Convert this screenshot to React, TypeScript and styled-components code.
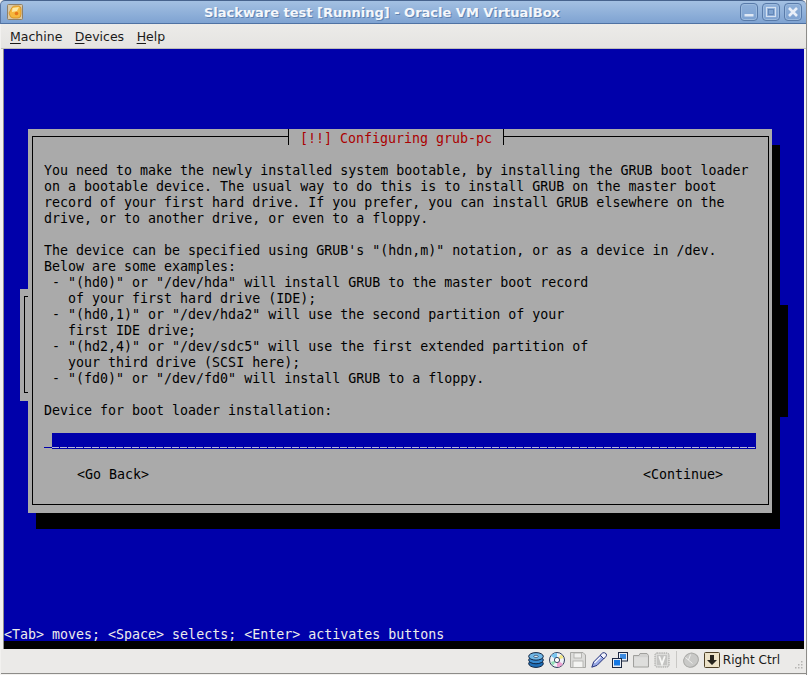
import React from "react";
import styled, { createGlobalStyle } from "styled-components";

const Global = createGlobalStyle`
  html, body { margin: 0; padding: 0; background: #ffffff; }
  #root { width: 808px; height: 675px; overflow: hidden; }
`;

const Window = styled.div`
  width: 808px;
  height: 675px;
  display: flex;
  flex-direction: column;
  background: #f2f1ef;
  font-family: "DejaVu Sans", sans-serif;
  box-sizing: border-box;
  border-right: 1px solid #fbfbfa;
  padding-right: 1px;
  box-shadow: inset -1px 0 0 #8d8c89;
`;

const TitleBar = styled.header`
  height: 24px;
  flex: none;
  display: flex;
  align-items: center;
  box-sizing: border-box;
  padding: 0 4px 0 6px;
  background: linear-gradient(#a3c0e2, #7fa3d2);
  border-top: 1px solid #47638d;
  border-bottom: 1px solid #4f72a3;
  border-left: 1px solid #5a77a3;
  border-radius: 5px 5px 0 0;
`;

const AppIcon = styled.svg`
  width: 16px;
  height: 16px;
  flex: none;
`;

const TitleText = styled.div`
  flex: 1;
  text-align: center;
  padding-left: 1px;
  color: #f4f7fb;
  font-weight: bold;
  font-size: 13px;
  text-shadow: 1px 1px 0 #5f82b0;
  white-space: nowrap;
`;

const WinButtons = styled.div`
  display: flex;
  gap: 4px;
`;

const WinButton = styled.button`
  width: 18px;
  height: 18px;
  padding: 0;
  display: flex;
  align-items: center;
  justify-content: center;
  background: linear-gradient(#8fb0d9, #7ea2d1);
  border: 1px solid #587aa9;
  border-radius: 4px;
  box-shadow: inset 0 0 0 1px #9dbbde;
`;

const MenuBar = styled.nav`
  height: 25px;
  flex: none;
  display: flex;
  align-items: center;
  gap: 12.5px;
  box-sizing: border-box;
  padding: 0 0 0 9px;
  margin-left: 1px;
  background: linear-gradient(#ecebe9, #e5e4e1);
  border-bottom: 1px solid #bdbcb9;
  font-size: 12.5px;
  color: #1a1a1a;
`;

const MenuItem = styled.span`
  white-space: nowrap;
  & u { text-underline-offset: 2px; }
`;

const Screen = styled.main`
  position: relative;
  flex: none;
  width: 800px;
  height: 600px;
  margin-left: 4px;
  background: #0000aa;
  box-shadow: -1px 0 0 #8f8f8f;
  display: flex;
  flex-direction: column;
  font-family: "DejaVu Sans Mono", "Liberation Mono", monospace;
  font-size: 13.3px;
  line-height: 16px;
  color: #000;
  overflow: hidden;
`;

const BackDialog = styled.div`
  position: absolute;
  left: 16px;
  top: 240px;
  width: 752px;
  height: 112px;
  background: #aaaaaa;
  box-shadow: 16px 16px 0 #000;
`;

const BackFrame = styled.div`
  position: absolute;
  left: 4px;
  top: 7px;
  right: 4px;
  bottom: 8px;
  border: 1px solid #000;
`;

const ConsoleArea = styled.div`
  flex: 1;
  position: relative;
  padding: 80px 0 0 24px;
`;

const Dialog = styled.section`
  position: relative;
  width: 744px;
  height: 384px;
  box-sizing: border-box;
  padding: 7px 3px 8px 4px;
  background: #aaaaaa;
  box-shadow: 8px 16px 0 #000;
`;

const Frame = styled.div`
  position: relative;
  height: 100%;
  box-sizing: border-box;
  border: 1px solid #000;
  padding: 26px 11px 0;
  display: flex;
  flex-direction: column;
`;

const DialogTitle = styled.h1`
  position: absolute;
  left: 255px;
  top: -8px;
  height: 16px;
  box-sizing: border-box;
  margin: 0;
  padding: 2px 11px 0;
  background: #aaaaaa;
  border-left: 1px solid #000;
  border-right: 1px solid #000;
  color: #aa0000;
  font: inherit;
  white-space: pre;
`;

const Body = styled.pre`
  margin: 0;
  font: inherit;
  white-space: pre;
`;

const FieldRow = styled.div`
  display: flex;
  height: 16px;
  margin-top: 14px;
`;

const FieldLead = styled.div`
  width: 8px;
  height: 15px;
  box-sizing: border-box;
  border-bottom: 1px solid #0000aa;
`;

const Field = styled.div`
  position: relative;
  width: 704px;
  height: 16px;
  background: #0000aa;
  &::after {
    content: "";
    position: absolute;
    left: 0;
    right: 0;
    bottom: 1px;
    height: 1px;
    background: repeating-linear-gradient(90deg, #b9b9d8 0 7px, transparent 7px 8px);
  }
`;

const ButtonRow = styled.div`
  display: flex;
  justify-content: space-between;
  margin-top: 18px;
  padding: 0 34px 0 33px;
`;

const ConsoleButton = styled.span`
  white-space: pre;
`;

const StatusLine = styled.div`
  flex: none;
  height: 16px;
  box-sizing: border-box;
  padding-top: 2px;
  background: #0000aa;
  color: #ececec;
  white-space: pre;
`;

const BlackLine = styled.div`
  position: relative;
  flex: none;
  height: 8px;
  background: #000;
`;

const StatusBar = styled.footer`
  position: relative;
  flex: none;
  height: 25px;
  margin-left: 1px;
  display: flex;
  align-items: center;
  justify-content: flex-end;
  box-sizing: border-box;
  padding: 0 26px 3px 0;
  background: #ebeae8;
  border-bottom: 1px solid #8d8c89;
  font-size: 12.1px;
  color: #1a1a1a;
`;

const Icons = styled.div`
  display: flex;
  align-items: center;
  gap: 5px;
`;

const StatusIcon = styled.svg`
  width: 16px;
  height: 16px;
  flex: none;
`;

const Separator = styled.div`
  width: 1px;
  height: 17px;
  margin: 0 1px;
  background: #c9c8c5;
`;

const HostKey = styled.span`
  margin-left: 3px;
  white-space: nowrap;
`;

const Grip = styled.svg`
  position: absolute;
  right: 3px;
  bottom: 4px;
  width: 8px;
  height: 8px;
`;

const TEXT = `You need to make the newly installed system bootable, by installing the GRUB boot loader
on a bootable device. The usual way to do this is to install GRUB on the master boot
record of your first hard drive. If you prefer, you can install GRUB elsewhere on the
drive, or to another drive, or even to a floppy.

The device can be specified using GRUB's "(hdn,m)" notation, or as a device in /dev.
Below are some examples:
 - "(hd0)" or "/dev/hda" will install GRUB to the master boot record
   of your first hard drive (IDE);
 - "(hd0,1)" or "/dev/hda2" will use the second partition of your
   first IDE drive;
 - "(hd2,4)" or "/dev/sdc5" will use the first extended partition of
   your third drive (SCSI here);
 - "(fd0)" or "/dev/fd0" will install GRUB to a floppy.

Device for boot loader installation:`;

export default function App() {
  return (
    <Window>
      <Global />
      <TitleBar>
        <AppIcon viewBox="0 0 16 16">
          <rect x="0.5" y="0.5" width="15" height="15" rx="1" fill="#d9c9a8" stroke="#8f8068" />
          <path d="M2 9 L5 3.5 Q6 2 8 2 L12 2 Q14 2.5 14 5 L14 10 Q14 14 11 14 L6 14 Q3 14 2 9 Z" fill="#f5b83e" stroke="#cf8518" strokeWidth="0.7" />
          <path d="M5.5 4 L12 3 L10 7 L5 8 Z" fill="#fde9a6" />
          <circle cx="9.5" cy="9.5" r="1.8" fill="#e8771a" />
        </AppIcon>
        <TitleText>Slackware test [Running] - Oracle VM VirtualBox</TitleText>
        <WinButtons>
          <WinButton aria-label="Minimize">
            <svg width="12" height="12" viewBox="0 0 12 12"><rect x="1.5" y="8" width="9" height="2.5" fill="#dfe8f4" /></svg>
          </WinButton>
          <WinButton aria-label="Maximize">
            <svg width="12" height="12" viewBox="0 0 12 12"><rect x="1.5" y="1.5" width="9" height="9" fill="none" stroke="#d5e1f0" strokeWidth="1.2" /><rect x="3.5" y="3.5" width="5" height="5" fill="#7fa3d1" stroke="#5d7fae" strokeWidth="0.8" /></svg>
          </WinButton>
          <WinButton aria-label="Close">
            <svg width="12" height="12" viewBox="0 0 12 12"><path d="M2 2 L10 10 M10 2 L2 10" stroke="#e9eff8" strokeWidth="2.6" /></svg>
          </WinButton>
        </WinButtons>
      </TitleBar>
      <MenuBar>
        <MenuItem><u>M</u>achine</MenuItem>
        <MenuItem><u>D</u>evices</MenuItem>
        <MenuItem><u>H</u>elp</MenuItem>
      </MenuBar>
      <Screen>
        <ConsoleArea>
          <BackDialog><BackFrame /></BackDialog>
          <Dialog>
            <Frame>
              <DialogTitle>[!!] Configuring grub-pc</DialogTitle>
              <Body>{TEXT}</Body>
              <FieldRow>
                <FieldLead />
                <Field />
              </FieldRow>
              <ButtonRow>
                <ConsoleButton>&lt;Go Back&gt;</ConsoleButton>
                <ConsoleButton>&lt;Continue&gt;</ConsoleButton>
              </ButtonRow>
            </Frame>
          </Dialog>
        </ConsoleArea>
        <StatusLine>&lt;Tab&gt; moves; &lt;Space&gt; selects; &lt;Enter&gt; activates buttons</StatusLine>
        <BlackLine />
      </Screen>
      <StatusBar>
        <Icons>
          <StatusIcon viewBox="0 0 16 16">
            <ellipse cx="8" cy="11.6" rx="7.3" ry="3.8" fill="#1f6fb8" stroke="#10233f" />
            <ellipse cx="8" cy="8" rx="7.3" ry="3.8" fill="#3a8bd0" stroke="#10233f" />
            <ellipse cx="8" cy="4.4" rx="7.3" ry="3.8" fill="#6fb6e6" stroke="#10233f" />
            <ellipse cx="8" cy="4.4" rx="2.2" ry="1.1" fill="#e6f4fc" stroke="#10233f" strokeWidth="0.6" />
          </StatusIcon>
          <StatusIcon viewBox="0 0 16 16">
            <circle cx="8" cy="8" r="7.5" fill="#eef1f6" stroke="#2f3d5c" />
            <path d="M8 8 L2 4 A7 7 0 0 1 8 1 Z" fill="#7ac6f0" />
            <path d="M8 8 L14 12 A7 7 0 0 1 8 15 Z" fill="#eda2d2" />
            <path d="M8 8 L14.5 6 A7 7 0 0 0 12 2.5 Z" fill="#f2e888" />
            <path d="M8 8 L2 10 A7 7 0 0 0 4 13.5 Z" fill="#92e0b4" />
            <circle cx="8" cy="8" r="2.6" fill="#fff" stroke="#3d4a66" />
          </StatusIcon>
          <StatusIcon viewBox="0 0 16 16">
            <path d="M0.5 0.5 H13 L15.5 3 V15.5 H0.5 Z" fill="#dcdcda" stroke="#a8a8a5" />
            <rect x="4" y="1" width="7.5" height="5" fill="#efefed" stroke="#acaca9" strokeWidth="0.8" />
            <rect x="3" y="9" width="10" height="6.5" fill="#f4f4f2" stroke="#acaca9" strokeWidth="0.8" />
          </StatusIcon>
          <StatusIcon viewBox="0 0 16 16">
            <path d="M0.8 15.2 L2.6 10 L9.8 2.8 L13.2 6.2 L6 13.4 Z" fill="#9aaae6" stroke="#26337a" />
            <path d="M9.2 3.2 L11.8 0.8 Q13.6 0.2 15.2 1.8 Q15.8 3.4 15.2 4.2 L12.8 6.8 Z" fill="#f2f4fc" stroke="#26337a" />
            <path d="M3.5 10.8 L9.5 4.8" stroke="#fff" strokeWidth="1.2" />
          </StatusIcon>
          <StatusIcon viewBox="0 0 16 16">
            <rect x="6.5" y="0.5" width="9" height="8.5" fill="#e8edf4" stroke="#1d2840" />
            <rect x="8" y="2" width="6" height="5" fill="#3a8ae0" />
            <rect x="0.5" y="6.5" width="9" height="9" fill="#e8edf4" stroke="#1d2840" />
            <rect x="2" y="8" width="6" height="5.5" fill="#1478e4" />
          </StatusIcon>
          <StatusIcon viewBox="0 0 16 16">
            <path d="M0.5 15 V3.5 H6 L7 1.5 H14 L15.5 3.5 V15 Z" fill="#d2d2d0" stroke="#a0a09d" />
            <rect x="1.2" y="5.2" width="13.6" height="9" fill="#dededc" />
          </StatusIcon>
          <StatusIcon viewBox="0 0 16 16">
            <rect x="1" y="1" width="14" height="14" rx="2" fill="#dcdcda" stroke="#9f9f9c" strokeDasharray="1.4 0.8" />
            <rect x="3" y="3" width="10" height="10" fill="#c4c4c2" />
            <path d="M5.2 4.2 L8 12 L10.8 4.2" fill="none" stroke="#f7f7f5" strokeWidth="1.8" />
          </StatusIcon>
          <Separator />
          <StatusIcon viewBox="0 0 16 16">
            <ellipse cx="8" cy="8.2" rx="7.6" ry="6.8" transform="rotate(-35 8 8.2)" fill="#c9c9c7" stroke="#a8a8a5" />
            <path d="M2.5 5.5 L9.5 11.5 M7.5 2.5 L5.5 8" stroke="#efefed" strokeWidth="1" />
          </StatusIcon>
          <StatusIcon viewBox="0 0 16 16">
            <rect x="0.5" y="0.5" width="15" height="15" rx="1" fill="#ece2c8" stroke="#4d4026" />
            <path d="M6 3 H10 V8 H13 L8 13 L3 8 H6 Z" fill="#26241e" />
          </StatusIcon>
        </Icons>
        <HostKey>Right Ctrl</HostKey>
        <Grip viewBox="0 0 8 8">
          <g fill="#b5b4b1">
            <rect x="6" y="0" width="1.5" height="1.5" />
            <rect x="3" y="3" width="1.5" height="1.5" />
            <rect x="6" y="3" width="1.5" height="1.5" />
            <rect x="0" y="6" width="1.5" height="1.5" />
            <rect x="3" y="6" width="1.5" height="1.5" />
            <rect x="6" y="6" width="1.5" height="1.5" />
          </g>
        </Grip>
      </StatusBar>
    </Window>
  );
}
